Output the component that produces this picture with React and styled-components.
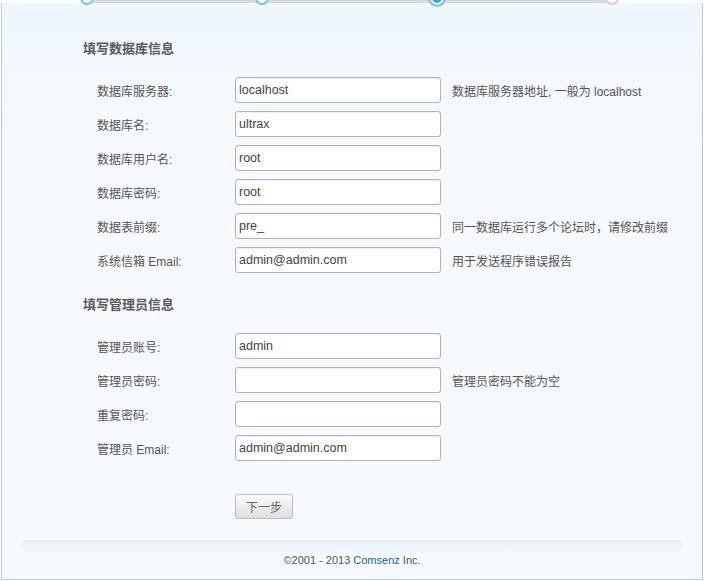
import React from "react";
import styled, { createGlobalStyle } from "styled-components";

const GlobalStyle = createGlobalStyle`
  html, body {
    margin: 0;
    padding: 0;
    background: #fff;
  }
  body {
    font-family: "Liberation Sans", "Noto Sans CJK SC", sans-serif;
    font-size: 12px;
    color: #555;
  }
`;

const Stepper = styled.div`
  position: relative;
  z-index: 1;
  height: 3px;
`;

const Track = styled.div`
  position: relative;
  margin-left: 87px;
  width: 525px;
  height: 3px;
  background: #d9d9d9;
`;

const Dot = styled.span`
  position: absolute;
  box-sizing: border-box;
  top: ${({ active }) => (active ? "-11px" : "-9px")};
  width: ${({ active }) => (active ? "18px" : "14px")};
  height: ${({ active }) => (active ? "18px" : "14px")};
  margin-left: ${({ active }) => (active ? "-9px" : "-7px")};
  border-radius: 50%;
  border: 2px solid ${({ todo }) => (todo ? "#cfcfcf" : "#7cc2ef")};
  background: ${({ active }) => (active ? "#3ea3e8" : "#fff")};
  box-shadow: ${({ active }) => (active ? "inset 0 0 0 2px #fff" : "none")};
`;

const Box = styled.div`
  margin: 0 1px 0 1px;
  border: 1px solid #b7d3db;
  border-top: 0;
  background: linear-gradient(#eff7fc, #f6fafe 140px, #f6fafe);
  padding-top: 37px;
`;

const Section = styled.div`
  padding-left: 81px;
  & + & {
    margin-top: 23px;
  }
`;

const Heading = styled.div`
  font-size: 13px;
  font-weight: bold;
  line-height: 18px;
  color: #5a5a5a;
  margin-bottom: 19px;
`;

const Rows = styled.div`
  display: flex;
  flex-direction: column;
  gap: 8px;
  padding-left: 14px;
`;

const Row = styled.div`
  display: flex;
  align-items: center;
  height: 26px;
`;

const Label = styled.label`
  width: 138px;
  flex: none;
  color: #555;
`;

const Input = styled.input`
  box-sizing: border-box;
  width: 206px;
  height: 26px;
  padding: 0 3px;
  border: 1px solid #b2b2b2;
  border-radius: 3px;
  background: #fff;
  box-shadow: inset 0 1px 1px rgba(0, 0, 0, 0.06);
  font-family: "Liberation Sans", "Noto Sans CJK SC", sans-serif;
  font-size: 12.5px;
  color: #444;
  outline: none;
`;

const Hint = styled.span`
  margin-left: 11px;
  color: #555;
`;

const Actions = styled.div`
  padding: 33px 0 0 233px;
`;

const Button = styled.button`
  box-sizing: border-box;
  width: 58px;
  height: 25px;
  border: 1px solid #bcbcbc;
  border-radius: 3px;
  background: linear-gradient(#fbfbfb, #dedede);
  font-family: "Liberation Sans", "Noto Sans CJK SC", sans-serif;
  font-size: 12px;
  color: #666;
  cursor: pointer;
`;

const FooterBand = styled.div`
  margin: 19px 20px 0 20px;
  height: 12px;
  border-top: 2px solid #fff;
  background: linear-gradient(#e3eff9, #f1f8fd);
`;

const Copyright = styled.div`
  text-align: center;
  font-size: 11px;
  line-height: 14px;
  color: #555;
  padding: 1px 0 12px;

  a {
    color: #1d5fa6;
    text-decoration: none;
  }
`;

const dbFields = [
  { label: "数据库服务器:", value: "localhost", hint: "数据库服务器地址, 一般为 localhost" },
  { label: "数据库名:", value: "ultrax" },
  { label: "数据库用户名:", value: "root" },
  { label: "数据库密码:", value: "root" },
  { label: "数据表前缀:", value: "pre_", hint: "同一数据库运行多个论坛时，请修改前缀" },
  { label: "系统信箱 Email:", value: "admin@admin.com", hint: "用于发送程序错误报告" },
];

const adminFields = [
  { label: "管理员账号:", value: "admin" },
  { label: "管理员密码:", value: "", hint: "管理员密码不能为空", type: "password" },
  { label: "重复密码:", value: "", type: "password" },
  { label: "管理员 Email:", value: "admin@admin.com" },
];

function Field({ label, value, hint, type }) {
  return (
    <Row>
      <Label>{label}</Label>
      <Input type={type || "text"} defaultValue={value} />
      {hint && <Hint>{hint}</Hint>}
    </Row>
  );
}

export default function App() {
  return (
    <>
      <GlobalStyle />
      <Stepper>
        <Track>
          <Dot style={{ left: "0%" }} />
          <Dot style={{ left: "33.33%" }} />
          <Dot active style={{ left: "66.67%" }} />
          <Dot todo style={{ left: "100%" }} />
        </Track>
      </Stepper>
      <Box>
        <Section>
          <Heading>填写数据库信息</Heading>
          <Rows>
            {dbFields.map((f) => (
              <Field key={f.label} {...f} />
            ))}
          </Rows>
        </Section>
        <Section>
          <Heading>填写管理员信息</Heading>
          <Rows>
            {adminFields.map((f) => (
              <Field key={f.label} {...f} />
            ))}
          </Rows>
        </Section>
        <Actions>
          <Button>下一步</Button>
        </Actions>
        <FooterBand />
        <Copyright>
          ©2001 - 2013 <a href="#">Comsenz</a> Inc.
        </Copyright>
      </Box>
    </>
  );
}
